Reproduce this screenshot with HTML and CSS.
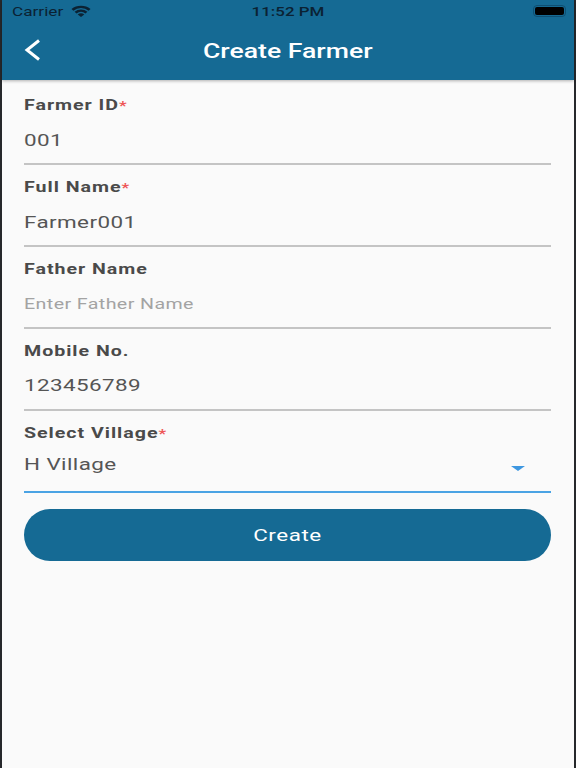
FILE: index.html
```html
<!DOCTYPE html>
<html>
<head>
    <title>Create Farmer</title>
    <link rel="stylesheet" href="styles.css">
</head>
<body>
    <div class="screen">
        <div class="appbar">
            <div class="statusbar">
                <div class="status-left">
                    <span class="carrier">Carrier</span>
                    <svg class="wifi" width="20" height="12" viewBox="0 0 20 14" preserveAspectRatio="none">
                        <path d="M0.5 4.6 A14 14 0 0 1 19.5 4.6 L17.6 6.6 A11.2 11.2 0 0 0 2.4 6.6 Z" fill="#0b2233"/>
                        <path d="M3.6 7.8 A9.6 9.6 0 0 1 16.4 7.8 L14.5 9.8 A6.8 6.8 0 0 0 5.5 9.8 Z" fill="#0b2233"/>
                        <path d="M6.7 11 A5 5 0 0 1 13.3 11 L10 14 Z" fill="#0b2233"/>
                    </svg>
                </div>
                <span class="clock">11:52 PM</span>
                <div class="battery"><div class="battery-level"></div></div>
            </div>
            <div class="titlebar">
                <svg class="back" width="18" height="24" viewBox="0 0 18 24">
                    <path d="M16 2.5 L4 12 L16 21.5" fill="none" stroke="#fff" stroke-width="3"/>
                </svg>
                <h1>Create Farmer</h1>
            </div>
        </div>

        <div class="form">
            <div class="field">
                <label>Farmer ID<span class="req">*</span></label>
                <div class="value">001</div>
            </div>
            <div class="field">
                <label>Full Name<span class="req">*</span></label>
                <div class="value">Farmer001</div>
            </div>
            <div class="field">
                <label>Father Name</label>
                <div class="value placeholder">Enter Father Name</div>
            </div>
            <div class="field">
                <label>Mobile No.</label>
                <div class="value">123456789</div>
            </div>
            <div class="field select">
                <label>Select Village<span class="req">*</span></label>
                <div class="select-row">
                    <div class="value">H Village</div>
                    <span class="caret"></span>
                </div>
            </div>
            <button class="create-btn"><span>Create</span></button>
        </div>
    </div>
</body>
</html>
```

FILE: styles.css
```css
* {
    box-sizing: border-box;
}
html, body {
    margin: 0;
    padding: 0;
}
body {
    width: 576px;
    height: 768px;
    overflow: hidden;
    background-color: #26282b;
    font-family: Roboto, sans-serif;
}
.screen {
    height: 768px;
    margin: 0 2px;
    background-color: #fafafa;
    position: relative;
}
.appbar {
    height: 80px;
    background-color: #156a94;
    box-shadow: 0 1px 3px rgba(0,0,0,0.3);
}
.statusbar {
    height: 22px;
    display: flex;
    align-items: center;
    justify-content: space-between;
    padding: 0 8px 0 10px;
    font-size: 13px;
    color: #0b2233;
    position: relative;
}
.status-left {
    display: flex;
    align-items: center;
}
.carrier {
    width: 59px;
    transform: scaleX(1.32);
    transform-origin: left center;
}
.clock {
    position: absolute;
    left: 0;
    right: 0;
    width: fit-content;
    margin: 0 auto;
    font-weight: 500;
    transform: scaleX(1.3);
}
.battery {
    width: 33px;
    height: 12px;
    border: 1px solid #0f4f72;
    border-radius: 4px;
    padding: 1px;
}
.battery-level {
    height: 100%;
    background-color: #000;
    border-radius: 2px;
}
.titlebar {
    height: 58px;
    display: flex;
    align-items: center;
    justify-content: center;
    position: relative;
}
.titlebar h1 {
    margin: 0;
    color: #fff;
    font-size: 20px;
    font-weight: 500;
    transform: scaleX(1.33);
}
.back {
    position: absolute;
    left: 21px;
    top: 16px;
}
.form {
    padding: 16px 23px 0 22px;
}
.field {
    height: 69px;
    border-bottom: 2px solid #c4c4c4;
    margin-bottom: 13px;
    padding-top: 1px;
}
.field label {
    display: block;
    width: fit-content;
    font-size: 14px;
    line-height: 16px;
    font-weight: 700;
    color: #4a4a4a;
    letter-spacing: 0.7px;
    transform: scaleX(1.4);
    transform-origin: left center;
}
.req {
    color: #ee5555;
    font-size: 12px;
    letter-spacing: 0;
}
.value {
    width: fit-content;
    margin-top: 17px;
    font-size: 16px;
    line-height: 20px;
    color: #555;
    letter-spacing: 0.3px;
    transform: scaleX(1.4);
    transform-origin: left center;
}
.placeholder {
    font-size: 14px;
    color: #a3a3a3;
}
.select {
    border-bottom-color: #4aa3e4;
    margin-bottom: 16px;
}
.select-row {
    display: flex;
    align-items: center;
    justify-content: space-between;
    padding-right: 26px;
    margin-top: 13px;
}
.select-row .value {
    margin-top: 0;
}
.caret {
    width: 0;
    height: 0;
    margin-top: 7px;
    border-left: 7px solid transparent;
    border-right: 7px solid transparent;
    border-top: 5px solid #3d97e0;
}
.create-btn {
    display: block;
    width: 100%;
    height: 52px;
    border: none;
    border-radius: 26px;
    background-color: #156a94;
    color: #fff;
    font-family: inherit;
    font-size: 16px;
    letter-spacing: 0.4px;
}
.create-btn span {
    display: inline-block;
    transform: scaleX(1.4);
}
```
